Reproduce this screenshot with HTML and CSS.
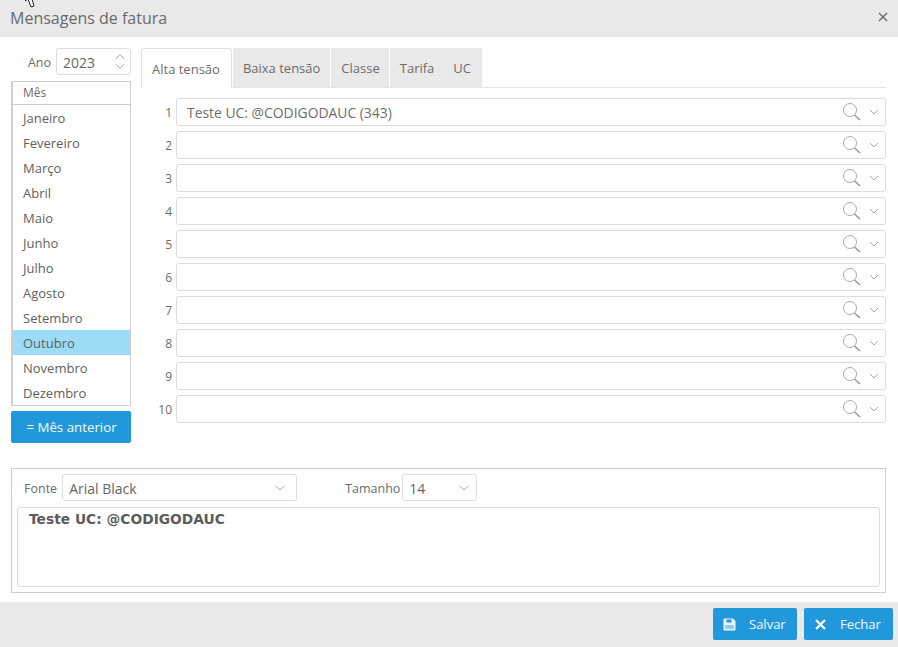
FILE: index.html
```html
<!DOCTYPE html>
<html lang="pt">
<head>
<meta charset="utf-8">
<title>Mensagens de fatura</title>
<link rel="stylesheet" href="styles.css">
</head>
<body>
<div class="dialog">
  <svg class="cursor" width="12" height="8" viewBox="0 0 12 8"><path d="M0 -4 L0 1 L3 -1 L6 7 L9 6 L7 -1 Z" fill="#fff" stroke="#222" stroke-width="1"/></svg>
  <header class="head">
    <h1 class="title">Mensagens de fatura</h1>
    <svg class="close" width="10" height="10" viewBox="0 0 10 10"><path d="M1 1 L9 9 M9 1 L1 9" stroke="#666" stroke-width="1.3"/></svg>
  </header>
  <main class="main">
    <section class="months">
      <div class="year-row">
        <span class="lab">Ano</span>
        <div class="field year"><span>2023</span>
          <svg class="spin" width="10" height="15" viewBox="0 0 10 15"><path d="M0.7 5 L5 0.8 L9.3 5 M0.7 10 L5 14.2 L9.3 10" fill="none" stroke="#aaa" stroke-width="1"/></svg>
        </div>
      </div>
      <div class="month-list">
        <div class="month-head">Mês</div>
        <div class="month">Janeiro</div>
        <div class="month">Fevereiro</div>
        <div class="month">Março</div>
        <div class="month">Abril</div>
        <div class="month">Maio</div>
        <div class="month">Junho</div>
        <div class="month">Julho</div>
        <div class="month">Agosto</div>
        <div class="month">Setembro</div>
        <div class="month sel">Outubro</div>
        <div class="month">Novembro</div>
        <div class="month">Dezembro</div>
      </div>
      <button class="btn prev">= Mês anterior</button>
    </section>
    <section class="content">
      <nav class="tabs">
        <span class="tab active">Alta tensão</span>
        <span class="tab">Baixa tensão</span>
        <span class="tab">Classe</span>
        <span class="tab">Tarifa</span>
        <span class="tab">UC</span>
      </nav>
      <div class="rows">
        <div class="row"><span class="num">1</span><div class="field line"><span class="val">Teste UC: @CODIGODAUC (343)</span><svg class="search" width="20" height="20" viewBox="0 0 20 20"><circle cx="8" cy="8" r="6.5" fill="none" stroke="#aaa" stroke-width="1"/><path d="M12.5 13 L18 18" stroke="#999" stroke-width="1.6"/></svg><svg class="chev" width="10" height="6" viewBox="0 0 10 6"><path d="M1 1 L5 5 L9 1" fill="none" stroke="#aaa"/></svg></div></div>
        <div class="row"><span class="num">2</span><div class="field line"><span class="val"></span><svg class="search" width="20" height="20" viewBox="0 0 20 20"><circle cx="8" cy="8" r="6.5" fill="none" stroke="#aaa" stroke-width="1"/><path d="M12.5 13 L18 18" stroke="#999" stroke-width="1.6"/></svg><svg class="chev" width="10" height="6" viewBox="0 0 10 6"><path d="M1 1 L5 5 L9 1" fill="none" stroke="#aaa"/></svg></div></div>
        <div class="row"><span class="num">3</span><div class="field line"><span class="val"></span><svg class="search" width="20" height="20" viewBox="0 0 20 20"><circle cx="8" cy="8" r="6.5" fill="none" stroke="#aaa" stroke-width="1"/><path d="M12.5 13 L18 18" stroke="#999" stroke-width="1.6"/></svg><svg class="chev" width="10" height="6" viewBox="0 0 10 6"><path d="M1 1 L5 5 L9 1" fill="none" stroke="#aaa"/></svg></div></div>
        <div class="row"><span class="num">4</span><div class="field line"><span class="val"></span><svg class="search" width="20" height="20" viewBox="0 0 20 20"><circle cx="8" cy="8" r="6.5" fill="none" stroke="#aaa" stroke-width="1"/><path d="M12.5 13 L18 18" stroke="#999" stroke-width="1.6"/></svg><svg class="chev" width="10" height="6" viewBox="0 0 10 6"><path d="M1 1 L5 5 L9 1" fill="none" stroke="#aaa"/></svg></div></div>
        <div class="row"><span class="num">5</span><div class="field line"><span class="val"></span><svg class="search" width="20" height="20" viewBox="0 0 20 20"><circle cx="8" cy="8" r="6.5" fill="none" stroke="#aaa" stroke-width="1"/><path d="M12.5 13 L18 18" stroke="#999" stroke-width="1.6"/></svg><svg class="chev" width="10" height="6" viewBox="0 0 10 6"><path d="M1 1 L5 5 L9 1" fill="none" stroke="#aaa"/></svg></div></div>
        <div class="row"><span class="num">6</span><div class="field line"><span class="val"></span><svg class="search" width="20" height="20" viewBox="0 0 20 20"><circle cx="8" cy="8" r="6.5" fill="none" stroke="#aaa" stroke-width="1"/><path d="M12.5 13 L18 18" stroke="#999" stroke-width="1.6"/></svg><svg class="chev" width="10" height="6" viewBox="0 0 10 6"><path d="M1 1 L5 5 L9 1" fill="none" stroke="#aaa"/></svg></div></div>
        <div class="row"><span class="num">7</span><div class="field line"><span class="val"></span><svg class="search" width="20" height="20" viewBox="0 0 20 20"><circle cx="8" cy="8" r="6.5" fill="none" stroke="#aaa" stroke-width="1"/><path d="M12.5 13 L18 18" stroke="#999" stroke-width="1.6"/></svg><svg class="chev" width="10" height="6" viewBox="0 0 10 6"><path d="M1 1 L5 5 L9 1" fill="none" stroke="#aaa"/></svg></div></div>
        <div class="row"><span class="num">8</span><div class="field line"><span class="val"></span><svg class="search" width="20" height="20" viewBox="0 0 20 20"><circle cx="8" cy="8" r="6.5" fill="none" stroke="#aaa" stroke-width="1"/><path d="M12.5 13 L18 18" stroke="#999" stroke-width="1.6"/></svg><svg class="chev" width="10" height="6" viewBox="0 0 10 6"><path d="M1 1 L5 5 L9 1" fill="none" stroke="#aaa"/></svg></div></div>
        <div class="row"><span class="num">9</span><div class="field line"><span class="val"></span><svg class="search" width="20" height="20" viewBox="0 0 20 20"><circle cx="8" cy="8" r="6.5" fill="none" stroke="#aaa" stroke-width="1"/><path d="M12.5 13 L18 18" stroke="#999" stroke-width="1.6"/></svg><svg class="chev" width="10" height="6" viewBox="0 0 10 6"><path d="M1 1 L5 5 L9 1" fill="none" stroke="#aaa"/></svg></div></div>
        <div class="row"><span class="num">10</span><div class="field line"><span class="val"></span><svg class="search" width="20" height="20" viewBox="0 0 20 20"><circle cx="8" cy="8" r="6.5" fill="none" stroke="#aaa" stroke-width="1"/><path d="M12.5 13 L18 18" stroke="#999" stroke-width="1.6"/></svg><svg class="chev" width="10" height="6" viewBox="0 0 10 6"><path d="M1 1 L5 5 L9 1" fill="none" stroke="#aaa"/></svg></div></div>
      </div>
    </section>
  </main>
  <section class="editor">
    <div class="toolbar">
      <span class="lab font-lab">Fonte</span>
      <div class="field font-sel"><span>Arial Black</span><svg class="chev" width="10" height="6" viewBox="0 0 10 6"><path d="M1 1 L5 5 L9 1" fill="none" stroke="#aaa"/></svg></div>
      <span class="lab size-lab">Tamanho</span>
      <div class="field size-sel"><span>14</span><svg class="chev" width="10" height="6" viewBox="0 0 10 6"><path d="M1 1 L5 5 L9 1" fill="none" stroke="#aaa"/></svg></div>
    </div>
    <div class="text-area">Teste UC: @CODIGODAUC</div>
  </section>
  <footer class="foot">
    <button class="btn act save">
      <svg width="13" height="13" viewBox="0 0 13 13"><path d="M2.5 7 H10.5 V11 H2.5 Z" fill="#8ccbee"/><path fill-rule="evenodd" d="M1.5 0.5 H10 L12.5 3 V11.5 A1 1 0 0 1 11.5 12.5 H1.5 A1 1 0 0 1 0.5 11.5 V1.5 A1 1 0 0 1 1.5 0.5 Z M3.5 1.5 V4.5 H8.5 V1.5 Z M2.5 7 V11 H10.5 V7 Z" fill="#e8f4fb"/></svg>
      <span>Salvar</span>
    </button>
    <button class="btn act fechar">
      <svg width="11" height="11" viewBox="0 0 11 11"><path d="M1 1 L10 10 M10 1 L1 10" stroke="#fff" stroke-width="2.2"/></svg>
      <span>Fechar</span>
    </button>
  </footer>
</div>
</body>
</html>
```
FILE: styles.css
```css
* { box-sizing: border-box; }
html, body { margin: 0; padding: 0; background: #fff; }
body {
  width: 898px;
  height: 647px;
  overflow: hidden;
  font-family: "Open Sans", "Noto Sans", sans-serif;
  font-size: 13px;
  color: #5f5f5f;
}
.dialog { position: relative; width: 898px; height: 647px; display: flex; flex-direction: column; }
.cursor { position: absolute; left: 25px; top: 0; z-index: 2; }
.head {
  height: 37px;
  flex: none;
  background: #e9e9e9;
  display: flex;
  align-items: center;
  justify-content: space-between;
  padding: 0 10px 3px 10px;
}
.title { margin: 0; padding-top: 2px; font-size: 16px; font-weight: 400; color: #6a6a6a; }
.main { flex: none; height: 431px; display: flex; padding: 11px 12px 0 11px; gap: 10px; }
.months { width: 120px; flex: none; display: flex; flex-direction: column; }
.year-row { display: flex; align-items: center; justify-content: flex-end; gap: 5px; height: 27px; margin-bottom: 6px; }
.lab { font-size: 12.5px; color: #6c6c6c; padding-top: 1px; }
.field { border: 1px solid #dcdcdc; border-radius: 3px; background: #fff; display: flex; align-items: center; }
.year { width: 75px; height: 27px; padding: 1px 5px 0 6px; justify-content: space-between; font-size: 14px; color: #666; }
.spin { margin-top: -1px; }
.month-list { border: 2px solid #cfcfcf; border-top-width: 1px; border-right-width: 1px; border-bottom-width: 1px; height: 325px; flex: none; }
.month-head { height: 23px; line-height: 21px; padding-left: 10px; font-size: 12px; border-bottom: 1px solid #cfcfcf; color: #6c6c6c; }
.month { height: 25px; line-height: 25px; padding: 1px 0 0 10px; font-size: 13px; color: #5f5f5f; }
.month.sel { background: #9cdcf6; }
.btn { border: 0; border-radius: 2px; background: #2298dc; color: #f2f9fd; font-family: inherit; font-size: 13px; padding: 0; }
.prev { height: 32px; margin-top: 5px; font-size: 13.3px; padding: 0 0 1px 1px; }
.content { flex: 1; min-width: 0; }
.tabs { display: flex; height: 40px; gap: 1px; border-bottom: 1px solid #e6e6e6; }
.tab { background: #e9e9e9; height: 39px; line-height: 41px; padding: 0 10px; font-size: 13px; color: #6c6c6c; }
.tab:nth-child(3) { padding-right: 9px; }
.tab:nth-child(4) { padding-right: 9px; }
.tab:nth-child(5) { margin-left: -1px; padding-right: 11px; }
.tab.active { background: #fff; height: 40px; padding-right: 11px; border: 1px solid #e2e2e2; border-bottom: 0; border-radius: 3px 3px 0 0; margin-bottom: -1px; }
.rows { display: flex; flex-direction: column; gap: 5px; margin-top: 10px; }
.row { display: flex; align-items: center; gap: 4px; height: 28px; }
.num { width: 31px; text-align: right; font-size: 12px; color: #6c6c6c; }
.line { flex: 1; height: 28px; padding: 0 6px 0 10px; }
.val { flex: 1; font-size: 13.9px; color: #6e6e6e; }
.search { margin-right: 7px; }
.editor { flex: none; margin: 0 12px 0 11px; height: 125px; border: 1px solid #cfcfcf; padding: 5px; display: flex; flex-direction: column; }
.toolbar { display: flex; align-items: center; height: 27px; margin-bottom: 6px; }
.font-lab { margin-left: 7px; margin-right: 5px; }
.font-sel { width: 235px; height: 27px; padding: 1px 11px 0 6px; justify-content: space-between; font-size: 14px; color: #666; }
.size-lab { margin-left: 48px; margin-right: 2px; }
.size-sel { width: 75px; height: 27px; padding: 1px 7px 0 6px; justify-content: space-between; font-size: 14px; color: #666; }
.text-area { flex: 1; margin-bottom: 0; border: 1px solid #dcdcdc; border-radius: 3px; padding: 3px 11px; font-family: "DejaVu Sans", sans-serif; font-weight: 700; font-size: 13.8px; color: #5c5c5c; }
.foot { flex: 1; margin-top: 9px; background: #e9e9e9; display: flex; justify-content: flex-end; align-items: flex-start; gap: 7px; padding: 6px 5px 0 0; }
.act { height: 32px; display: flex; align-items: center; }
.save { width: 84px; padding-left: 10px; gap: 13px; }
.fechar { width: 89px; padding-left: 11px; gap: 14px; }
```
